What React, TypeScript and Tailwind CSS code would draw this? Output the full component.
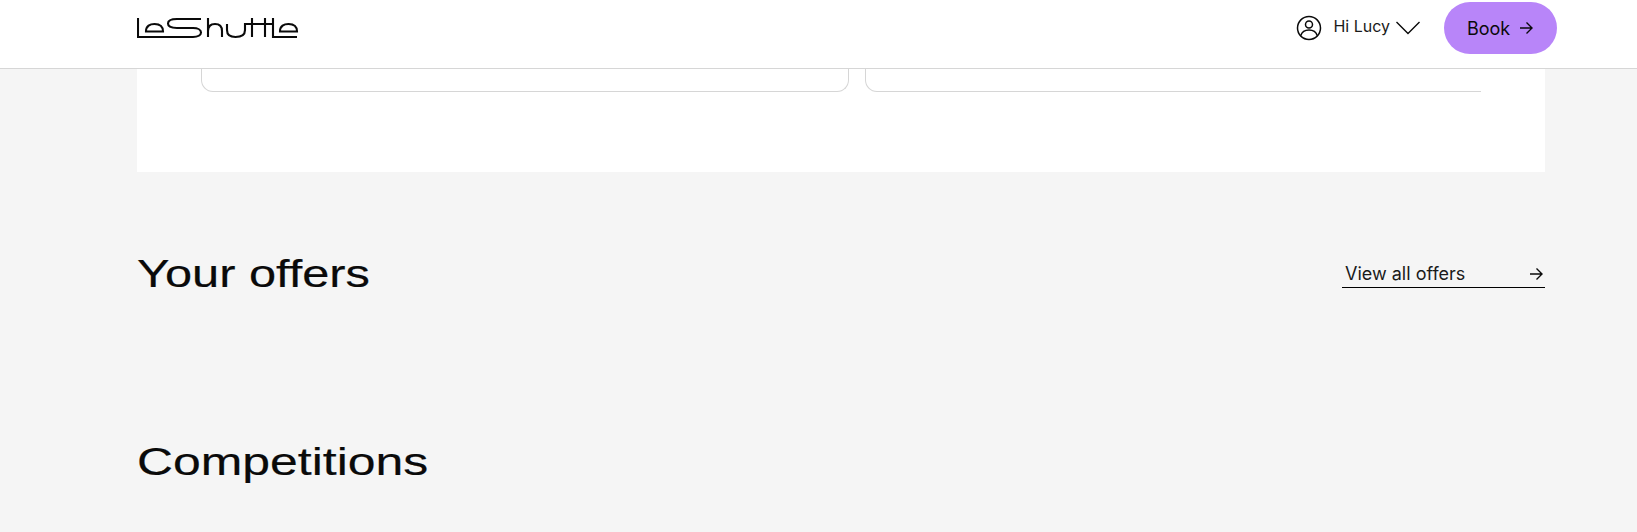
import React from "react";

function Logo() {
  return (
    <svg width="162" height="22" viewBox="0 0 162 22" fill="none" stroke="#0a0a0a" strokeWidth="2.1" className="block">
      <path d="M1 1V20H26" />
      <path d="M9 14.5C9 9 13 7 17.5 7S26 9 26 14.5H9Z" />
      <path d="M64 2H40C33 2 31 4 31 6.5S33 11 40 11H56C61 11 64 13 64 15.5S61 20 56 20H26" />
      <path d="M71 1V20M71 14C71 9 74 7 78 7S85 9 85 14V20" />
      <path d="M90 7V13C90 18 93 20 98.5 20S108 18 108 13V7H135" />
      <path d="M115 1V20M128 1V20" />
      <path d="M136 1V20H160" />
      <path d="M143 14.5C143 9 147 7 151.5 7S160 9 160 14.5H143Z" />
    </svg>
  );
}

function UserIcon() {
  return (
    <svg width="26" height="26" viewBox="0 0 26 26" fill="none" stroke="#0a0a0a" strokeWidth="1.5">
      <circle cx="13" cy="13" r="11.5" />
      <circle cx="13" cy="9.5" r="3.5" />
      <path d="M4.8 20.5C6 16.5 9 15 13 15S20 16.5 21.2 20.5" />
    </svg>
  );
}

function Arrow({ size = 16 }: { size?: number }) {
  return (
    <svg width={size} height={size} viewBox="0 0 16 16" fill="none" stroke="#0a0a0a" strokeWidth="1.4">
      <path d="M2 8H14M8.5 2.5L14 8L8.5 13.5" />
    </svg>
  );
}

export default function App() {
  return (
    <div className="h-[532px] w-full overflow-hidden bg-[#f5f5f5] font-['Inter',sans-serif]">
      <header className="h-[69px] border-b border-[#d6d6d6] bg-white">
        <div className="ml-[137px] mr-[80px] flex h-[68px] items-center justify-between pb-3">
          <Logo />
          <div className="flex items-center">
            <UserIcon />
            <span className="mb-1 ml-[11px] text-[16px] leading-5 text-[#1a1a1a]">Hi Lucy</span>
            <svg className="ml-[6px]" width="24" height="14" viewBox="0 0 24 14" fill="none" stroke="#0a0a0a" strokeWidth="1.4">
              <path d="M0.5 1L12 12.5L23.5 1" />
            </svg>
            <button className="ml-6 flex h-[52px] w-[113px] items-center justify-center gap-2 rounded-[26px] bg-[#b885f9] text-[18px] text-[#0a0a0a]">
              Book
              <Arrow />
            </button>
          </div>
        </div>
      </header>

      <main className="pl-[137px] pr-[92px]">
        <section className="h-[103px] bg-white px-16">
          <div className="flex gap-4 overflow-hidden">
            <div className="h-[23px] w-[648px] shrink-0 rounded-b-xl border border-t-0 border-[#d6d6d6]" />
            <div className="h-[23px] w-[648px] shrink-0 rounded-b-xl border border-t-0 border-[#d6d6d6]" />
          </div>
        </section>

        <section className="mt-[77px] flex items-start justify-between">
          <h2 className="origin-left scale-x-[1.282] text-[38px] leading-[50px] font-normal text-[#0a0a0a] font-['Liberation_Sans',sans-serif] [-webkit-text-stroke:0.2px_#0a0a0a]">
            Your offers
          </h2>
          <a className="mt-[13px] flex h-[26px] w-[203px] items-center justify-between border-b border-black pb-[2px] pl-[3px] pr-[1px] text-[18px] text-[#1a1a1a]">
            View all offers
            <Arrow />
          </a>
        </section>

        <section className="mt-[138px]">
          <h2 className="origin-left scale-x-[1.313] text-[38px] leading-[50px] font-normal text-[#0a0a0a] font-['Liberation_Sans',sans-serif] [-webkit-text-stroke:0.2px_#0a0a0a]">
            Competitions
          </h2>
        </section>
      </main>
    </div>
  );
}
